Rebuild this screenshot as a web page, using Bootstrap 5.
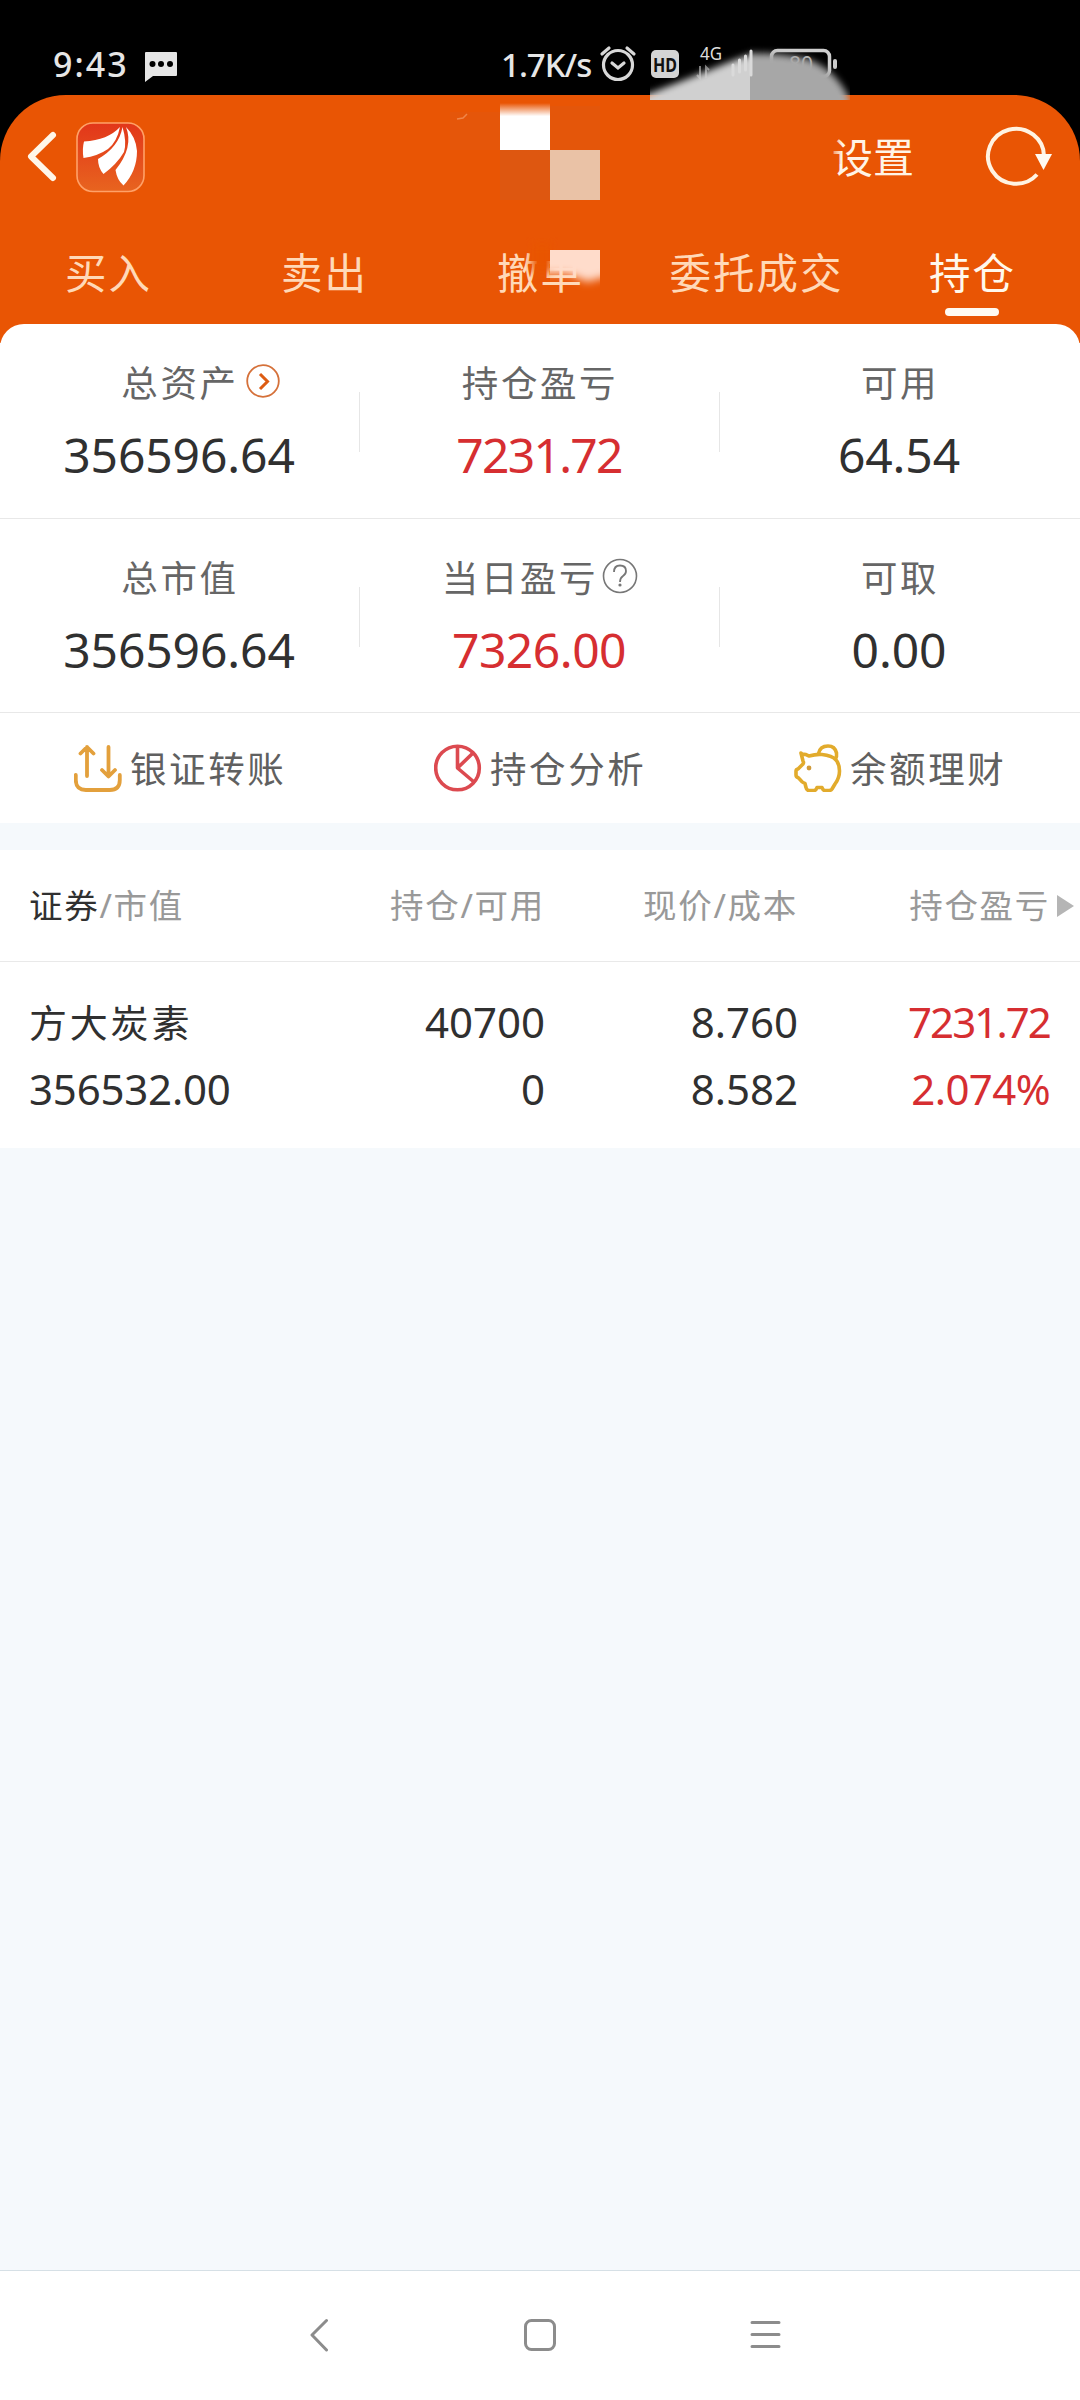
<!DOCTYPE html>
<html lang="zh-CN">
<head>
<meta charset="utf-8">
<meta name="viewport" content="width=device-width, initial-scale=1">
<title>持仓</title>
<link href="https://cdn.jsdelivr.net/npm/bootstrap@5.3.0/dist/css/bootstrap.min.css" rel="stylesheet">
<style>
  body { background: #f5f9fc; font-family: "Noto Sans", "Noto Sans CJK SC", sans-serif; line-height: 1; color: #303030; }
  svg { display: block; flex: none; }
  .screen { width: 1080px; height: 2400px; overflow: hidden; background: #f5f9fc; }
  .statusbar { height: 95px; background: #000; color: #e6e6e6; position: relative; }
  .clock { font-size: 34px; font-weight: 500; padding-left: 53px; width: 144px; letter-spacing: 2px; margin-top: 33px; }
  .chat { margin-top: 38px; }
  .speed { font-size: 33px; font-weight: 500; width: 95px; white-space: nowrap; letter-spacing: -1px; margin: 33px 0 0 323px; }
  .indicators { margin-top: 45px; }
  .topbar { background: #000; }
  .brand-zone { background: #e95504; border-radius: 66px 66px 0 0; height: 248px; }
  .title-line { height: 122px; position: relative; }
  .settings { font-size: 41px; color: #fff4e6; width: 100px; padding-top: 3px; }
  .tab { font-size: 41.5px; letter-spacing: 2px; color: #ffd9b8; height: 106px; padding-top: 36px; position: relative; text-indent: 1px; }
  .tab.on { color: #fff8ec; }
  .tab.on::after { content: ""; position: absolute; left: 81px; top: 91px; width: 54px; height: 8px; border-radius: 4px; background: #fffaf2; }
  .censor { position: absolute; pointer-events: none; }
  .censor-status { left: 640px; top: 40px; z-index: 3; }
  .censor-name { left: 440px; top: 0; }
  .censor-tab { left: 90px; top: 20px; }
  .refresh { margin: 8px 20px 0 0; }
  .sheet { background: #fff; border-radius: 24px 24px 0 0; margin-top: -19px; position: relative; }
  .sum-row { height: 194px; border-bottom: 1px solid #e8e8e8; }
  .sum-row.first { height: 195px; }
  .sum-cell { position: relative; padding-top: 41px; }
  .sum-cell + .sum-cell::before { content: ""; position: absolute; left: -1px; top: 68px; width: 1px; height: 60px; background: #e6e6e6; }
  .cap-line { height: 36px; font-size: 36.5px; letter-spacing: 2.6px; color: #666; }
  .go { margin: -4px -42px 0 6px; }
  .help { margin: -4px 0 0 4px; }
  .figure { font-size: 48px; height: 48px; margin: 30px 0 0 -2px; letter-spacing: -.1px; }
  .rise { color: #d62e31; }
  .figure.tight { letter-spacing: -1.7px; }
  .figure.snug { letter-spacing: -.5px; }
  .acts { height: 110px; font-size: 36.5px; letter-spacing: 2.6px; color: #606060; padding-bottom: 1px; }
  .acts .col { padding-left: 74px; gap: 8px; }
  .acts span { padding-top: 3px; }
  .pos { background: #fff; margin-top: 27px; }
  .pos-head { height: 112px; border-bottom: 1px solid #e9e9e9; font-size: 33.5px; letter-spacing: 1.7px; color: #999; padding-top: 1px; }
  .pos-head b { font-weight: 400; color: #303030; }
  .pos-body { height: 186px; font-size: 42px; padding-top: 35px; }
  .c1 { width: 290px; padding-left: 29px; }
  .c2 { width: 255px; text-align: right; }
  .c3 { width: 253px; text-align: right; }
  .c4 { width: 252px; text-align: right; }
  .more { margin-left: 7px; }
  .ln { height: 67px; line-height: 50px; white-space: nowrap; letter-spacing: 0; }
  .ln.cn { font-size: 38px; letter-spacing: 2.8px; }
  .ln.tight { letter-spacing: -1.9px; }
  .ln.mv { letter-spacing: -.2px; }
  .ln.snug { letter-spacing: -.6px; }
  .filler { height: 1122px; }
  .navkeys { height: 131px; background: #fff; border-top: 1px solid #d6e0e6; }
</style>
</head>
<body>
<div class="screen">
  <div class="statusbar d-flex align-items-center">
    <div class="clock">9:43</div>
    <svg class="chat" width="34" height="32" viewBox="0 0 34 32"><path d="M2 1h30q1 0 1 1v22q0 1-1 1H9l-8 6V2q0-1 1-1z" fill="#e6e6e6"/><g fill="#000"><circle cx="8.500" cy="13" r="3"/><circle cx="17" cy="13" r="3"/><circle cx="26" cy="13" r="3"/></g></svg>
    <div class="speed">1.7K/s</div>
    <svg class="indicators" width="265" height="60" viewBox="596 40 265 60">
      <g fill="none" stroke="#d8d8d8" stroke-width="3.200" stroke-linecap="round"><circle cx="618" cy="65" r="14.500"/><path d="M602 54l7-6M634 54l-7-6M612 63l6 5 6-5"/></g>
      <rect x="651" y="50" width="28" height="28" rx="5" fill="#d4d4d4"/><text x="653" y="71.500" font-size="19" font-weight="700" textLength="24" lengthAdjust="spacingAndGlyphs" fill="#111">HD</text>
      <text x="700" y="60" font-size="18.500" textLength="22" lengthAdjust="spacingAndGlyphs" fill="#ddd">4G</text>
      <path d="M700 66v12l-3-3M706 78V67l3 3" stroke="#777" stroke-width="2" fill="none"/>
      <rect x="771.500" y="50.500" width="58" height="26" rx="6" fill="none" stroke="#cfcfcf" stroke-width="3.500"/><rect x="833" y="59" width="4" height="10" rx="2" fill="#ccc"/>
      <text x="789" y="72" font-size="21" fill="#bbb">80</text>
    </svg>
    <svg class="censor censor-status" width="230" height="60" viewBox="640 40 230 60">
      <defs><filter id="soft" x="-10%" y="-20%" width="120%" height="140%"><feGaussianBlur stdDeviation="3.500"/></filter><clipPath id="l"><rect x="650" y="40" width="100" height="60"/></clipPath><clipPath id="r"><rect x="750" y="40" width="100" height="60"/></clipPath></defs>
      <g clip-path="url(#l)"><path d="M625 103Q690 78 722 65T765 52V115H625z" fill="#d0d0d0" filter="url(#soft)"/></g>
      <g clip-path="url(#r)"><path d="M730 54Q775 51 808 59Q836 70 849 98V115H730z" fill="#a7a7a7" filter="url(#soft)"/></g>
      <path d="M733 75v-10M739.500 72V60M745.500 70V56M751 75V51" stroke="#dadada" stroke-width="3" stroke-linecap="round"/>
    </svg>
  </div>

  <header class="topbar">
    <div class="brand-zone">
      <div class="title-line d-flex align-items-center">
        <svg width="150" height="122" viewBox="0 95 150 122">
          <defs><linearGradient id="g" x1="0" y1="0" x2="0" y2="1"><stop offset="0" stop-color="#e2361a"/><stop offset="1" stop-color="#e8641f"/></linearGradient></defs>
          <path d="M53 135L31 156.500L53 178" fill="none" stroke="#fff6e8" stroke-width="6" stroke-linecap="round" stroke-linejoin="round"/>
          <rect x="77" y="123" width="67" height="68.500" rx="16" fill="url(#g)" stroke="#ffa168" stroke-width="1.600"/>
          <g fill="#fff"><path d="M120 127Q108 140 84 141.500Q82 149 83.500 158Q98 156 108 149Q117 142 120 127z"/><path d="M122.500 127Q119 147 98 159Q98 168 103.500 174Q117 164 124 152Q127 142 122.500 127z"/><path d="M126 127Q134 147 115.500 170Q117 180 123.500 185.500Q137 171 137 151Q136 137 126 127z"/></g>
        </svg>
        <div class="settings ms-auto flex-shrink-0">设置</div>
        <svg class="refresh ms-5" width="80" height="80" viewBox="980 120 80 80"><path d="M1037 174.500A28 27.500 0 1 1 1044 157" fill="none" stroke="#fff3e2" stroke-width="4"/><path d="M1035 154h17l-8.500 16z" fill="#fffaf2"/></svg>
        <svg class="censor censor-name" width="410" height="110" viewBox="440 95 410 110">
          <defs><linearGradient id="w" x1="0" y1="0" x2="0" y2="1"><stop offset="0" stop-color="#fff" stop-opacity="0"/><stop offset=".28" stop-color="#fff"/></linearGradient><linearGradient id="h"><stop offset="0" stop-color="#e95504"/><stop offset="1" stop-color="#e95504" stop-opacity="0"/></linearGradient></defs>
          <rect x="450" y="112" width="50" height="38" fill="#e5560a"/><path d="M457 119l6-1 4-4" stroke="#f0864a" stroke-width="1.500" fill="none"/>
          <rect x="550" y="106" width="50" height="44" fill="#e4560a"/><rect x="500" y="150" width="50" height="50" fill="#de5710"/>
          <rect x="500" y="103" width="50" height="47" fill="url(#w)"/><rect x="550" y="150" width="50" height="50" fill="#eac2a6"/>
          <rect x="826" y="133" width="16" height="31" fill="url(#h)"/>
        </svg>
      </div>
      <nav class="row g-0 text-center">
        <div class="col tab">买入</div>
        <div class="col tab">卖出</div>
        <div class="col tab">撤单
          <svg class="censor censor-tab" width="90" height="70" viewBox="522 237 90 70"><defs><filter id="b2" x="-30%" y="-30%" width="160%" height="160%"><feGaussianBlur stdDeviation="4"/></filter><clipPath id="t"><rect x="550" y="250" width="50" height="50"/></clipPath></defs>
            <path d="M532 243h20v30h-20z" fill="#e95504" filter="url(#b2)"/>
            <g clip-path="url(#t)"><path d="M535 225h90v50q-25 2-37 7l-20-8h-33z" fill="#ffdccb" filter="url(#b2)"/></g></svg>
        </div>
        <div class="col tab">委托成交</div>
        <div class="col tab on">持仓</div>
      </nav>
    </div>
  </header>

  <main>
    <section class="sheet">
      <div class="sum-row first row g-0 text-center">
        <div class="col sum-cell">
          <div class="cap-line d-flex justify-content-center align-items-center"><span>总资产</span>
            <svg class="go" width="36" height="36" viewBox="0 0 36 36"><circle cx="18" cy="18" r="15.800" fill="none" stroke="#d5713a" stroke-width="1.800"/><path d="M15 11l7.500 7.500L15 26" fill="none" stroke="#dd5c12" stroke-width="3"/></svg></div>
          <div class="figure">356596.64</div></div>
        <div class="col sum-cell"><div class="cap-line">持仓盈亏</div><div class="figure rise tight">7231.72</div></div>
        <div class="col sum-cell"><div class="cap-line">可用</div><div class="figure">64.54</div></div>
      </div>
      <div class="sum-row row g-0 text-center">
        <div class="col sum-cell"><div class="cap-line">总市值</div><div class="figure">356596.64</div></div>
        <div class="col sum-cell">
          <div class="cap-line d-flex justify-content-center align-items-center"><span>当日盈亏</span>
            <svg class="help" width="36" height="36" viewBox="0 0 36 36"><circle cx="18" cy="18" r="16.500" fill="none" stroke="#777" stroke-width="1.600"/><path d="M12 14q0-6.500 6-6.500t6 5.500q0 3-3 5t-3 6" fill="none" stroke="#777" stroke-width="1.800"/><circle cx="18" cy="27" r="1.600" fill="#777"/></svg></div>
          <div class="figure rise snug">7326.00</div></div>
        <div class="col sum-cell"><div class="cap-line">可取</div><div class="figure">0.00</div></div>
      </div>
      <div class="acts row g-0">
        <div class="col d-flex align-items-center">
          <svg width="48" height="48" viewBox="0 0 48 48" fill="none" stroke="#e3a03c" stroke-width="3.800" stroke-linecap="round" stroke-linejoin="round"><path d="M1.800 31v5q0 10 10 10h24q10 0 10-10v-5M13 32V3M6.500 9.500L13 3l6.500 6.500M34.500 3v29M28 26l6.500 6.500L41 26"/></svg><span>银证转账</span></div>
        <div class="col d-flex align-items-center">
          <svg width="48" height="48" viewBox="0 0 48 48" fill="none" stroke="#dc4a50" stroke-width="3.600" stroke-linejoin="round"><circle cx="23.500" cy="24" r="21.800"/><path d="M23.500 2v22L39 9M23.500 24L40 38"/></svg><span>持仓分析</span></div>
        <div class="col d-flex align-items-center">
          <svg width="48" height="48" viewBox="0 0 48 48" fill="none" stroke="#e2ab2c" stroke-width="3.600" stroke-linejoin="round"><path d="M8 10q4 0 7 2 7-2 13-1.500Q38 11.500 42 16q3.500 4 3.500 11 0 7-4.500 13l-3 5q-1 1.500-3 1.500h-4q-2 0-3-3h-5q-1 3-3 3h-5q-2.500 0-3-3l-1-4q-3-1-5-4l-2-2q-2-.5-2-2.500v-4q0-1.500 2-2 2-2 5-5 1-1.500 0-3-1-4-2-8z"/><path d="M24.500 9.500Q26 2 34 2q7 0 8.500 7 .5 4-1 6"/><circle cx="15" cy="24" r="2.400" fill="#d09a3a" stroke="none"/></svg><span>余额理财</span></div>
      </div>
    </section>

    <section class="pos">
      <div class="pos-head d-flex align-items-center">
        <div class="c1"><b>证券</b>/市值</div>
        <div class="c2">持仓/可用</div><div class="c3">现价/成本</div><div class="c4">持仓盈亏</div>
        <svg class="more" width="18" height="22" viewBox="0 0 18 22"><path d="M0 0l17 11L0 22z" fill="#b5b5b5"/></svg>
      </div>
      <div class="pos-body d-flex">
        <div class="c1"><div class="ln cn">方大炭素</div><div class="ln mv">356532.00</div></div>
        <div class="c2"><div class="ln">40700</div><div class="ln">0</div></div>
        <div class="c3"><div class="ln">8.760</div><div class="ln">8.582</div></div>
        <div class="c4 rise"><div class="ln tight">7231.72</div><div class="ln snug">2.074%</div></div>
      </div>
    </section>
    <div class="filler"></div>
  </main>

  <footer class="navkeys">
    <svg width="1080" height="128" viewBox="0 2271 1080 128" fill="none" stroke="#8c8c8c" stroke-width="3" stroke-linecap="round" stroke-linejoin="round"><path d="M326.500 2320.500L312 2335l14.500 15M752 2322.500h27M752 2334.500h27M752 2346.500h27"/><rect x="525.500" y="2320.500" width="29" height="29" rx="6"/></svg>
  </footer>
</div>
<script src="https://cdn.jsdelivr.net/npm/bootstrap@5.3.0/dist/js/bootstrap.bundle.min.js"></script>
</body>
</html>
